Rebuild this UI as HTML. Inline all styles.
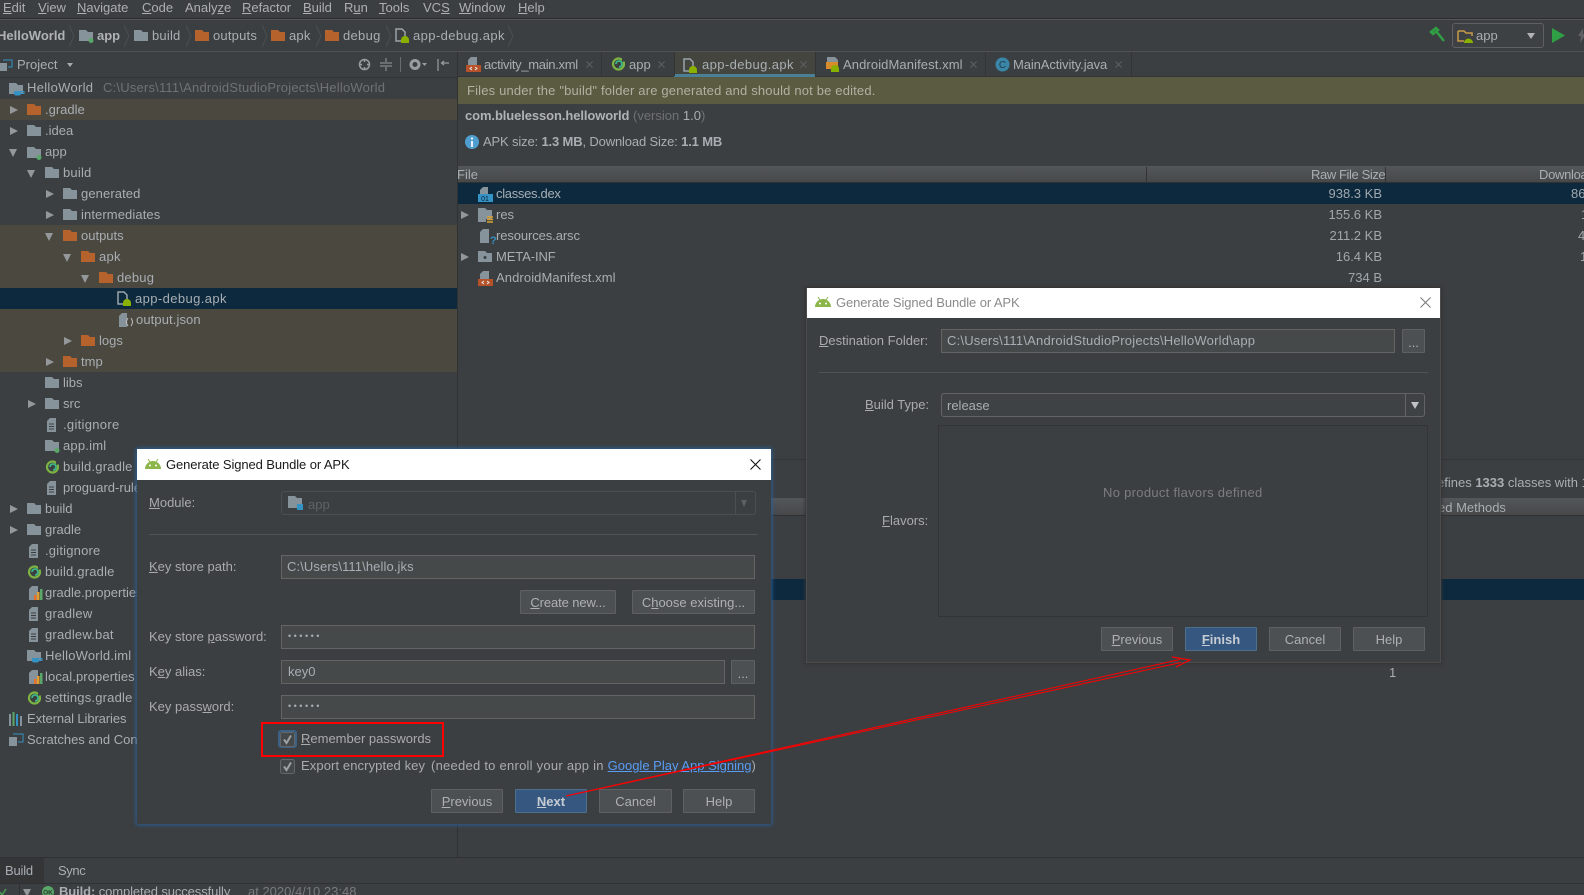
<!DOCTYPE html>
<html><head><meta charset="utf-8"><title>Generate Signed Bundle or APK</title>
<style>
html,body{margin:0;padding:0;background:#3c3f41;width:1584px;height:895px;overflow:hidden}
body{position:relative;font:13px/16px "Liberation Sans",sans-serif;color:#a8aeb3}
.t{position:absolute;white-space:nowrap;line-height:16px}
.a{position:absolute}
svg.i{position:absolute;overflow:visible}
.tr{position:absolute;width:0;height:0;margin-top:1px;border-left:8px solid #94989b;border-top:4.5px solid transparent;border-bottom:4.5px solid transparent}
.td{position:absolute;width:0;height:0;margin-top:1px;border-top:8px solid #94989b;border-left:4.5px solid transparent;border-right:4.5px solid transparent}
.m{color:#adafb1;top:0}
.b{font-weight:bold}
.o{position:absolute;left:0;width:457px;background:#4b4840}
.sel{position:absolute;background:#0d293e}
.input{position:absolute;box-sizing:border-box;background:#45494a;border:1px solid #646464}
.btn{position:absolute;box-sizing:border-box;height:24px;background:#4c5052;border:1px solid #5e6062;border-radius:1px;text-align:center;line-height:24px;color:#aeb0b2;white-space:nowrap}
.btn.d{background:#365880;border-color:#4c708c;color:#c5ccd4;font-weight:bold}
.dlg{position:absolute;box-sizing:border-box;background:#3c3f41}
.lbl{color:#a9abad}
.hdr{position:absolute;background:linear-gradient(#54575a,#46484a);border-bottom:1px solid #2f3132;box-sizing:border-box}
.sz{position:absolute;right:202px;white-space:nowrap;color:#a0a7ad}
.l1{letter-spacing:.1px}.l2{letter-spacing:.2px}.l3{letter-spacing:.3px}.l4{letter-spacing:.4px}
.n1{letter-spacing:-.1px}.n2{letter-spacing:-.2px}.n3{letter-spacing:-.3px}.n4{letter-spacing:-.4px}
</style></head><body>
<svg width="0" height="0" style="position:absolute">
<defs>
<symbol id="fg" viewBox="0 0 14 11"><path d="M0 0h7l2 2h5v9H0z" fill="#87939a"/></symbol>
<symbol id="fo" viewBox="0 0 14 11"><path d="M0 0h7l2 2h5v9H0z" fill="#b5622c"/></symbol>
<symbol id="fm" viewBox="0 0 15 13"><path d="M0 0h7l2 2h5v9H0z" fill="#87939a"/><circle cx="12" cy="10.500" r="2.500" fill="#59a869"/></symbol>
<symbol id="txt" viewBox="0 0 12 14"><path d="M3 0h6v14H0V3z" fill="#87939a"/><path d="M2 6h5M2 8.500h5M2 11h5" stroke="#3c3f41" stroke-width="1"/></symbol>
<symbol id="grd" viewBox="0 0 15 14"><circle cx="7.500" cy="7" r="5.500" fill="none" stroke="#7cb342" stroke-width="2.200"/><path d="M5 7a3 3 0 1 1 3 3" fill="none" stroke="#3bb58a" stroke-width="1.800"/><path d="M11 1l3 3-3 1z" fill="#3c3f41"/></symbol>
<symbol id="prop" viewBox="0 0 14 14"><path d="M3 0h6v14H0V3z" fill="#87939a"/><rect x="5" y="9" width="2.500" height="5" fill="#e8702a"/><rect x="8" y="6" width="2.500" height="8" fill="#e0a030"/><rect x="11" y="3" width="2.500" height="11" fill="#59a869"/></symbol>
<symbol id="iml" viewBox="0 0 16 13"><path d="M0 0h7l2 2h5v9H0z" fill="#87939a"/><path d="M5 8h7v2.500a2 2 0 0 1-2 2H7a2 2 0 0 1-2-2z" fill="#3592c4"/><path d="M12 8.500h3v2h-3" fill="none" stroke="#3592c4"/></symbol>
<symbol id="apk" viewBox="0 0 16 15"><path d="M1 1h6l3 3v9H1z" fill="none" stroke="#9aa4aa" stroke-width="1.500"/><path d="M6 15v-3a4 4 0 0 1 8 0v3z" fill="#8ab000"/></symbol>
<symbol id="and" viewBox="0 0 16 10"><path d="M0 10a8 8 0 0 1 16 0z" fill="#8cb64a"/><path d="M3 0l2 3M13 0l-2 3" stroke="#8cb64a"/><circle cx="5" cy="6.500" r="1" fill="#fff"/><circle cx="11" cy="6.500" r="1" fill="#fff"/></symbol>
<symbol id="xml" viewBox="0 0 15 15"><path d="M5 0h6v8H2V3z" fill="#87939a"/><rect x="0" y="8" width="15" height="7" fill="#b5522a"/><path d="M6 10l-2 1.500 2 1.500M9 10l2 1.500-2 1.500" stroke="#e8e8e8" fill="none"/></symbol>
<symbol id="x" viewBox="0 0 8 8"><path d="M.5.5l7 7M7.500.5l-7 7" stroke="#626568" stroke-width="1" fill="none"/></symbol>
<symbol id="chev" viewBox="0 0 6 22"><path d="M0 0l5 11-5 11" stroke="#4c4f51" stroke-width="1" fill="none"/></symbol>
<symbol id="chk" viewBox="0 0 15 15"><rect x=".5" y=".5" width="14" height="14" rx="2" fill="#43494a" stroke="#646668"/><path d="M4 7.500l2.500 3.500L11 3.500" stroke="#a0a0a0" stroke-width="2" fill="none"/></symbol>
</defs></svg>

<!-- Menu -->
<span class="t m" style="left:3px"><u>E</u>dit</span>
<span class="t m" style="left:38px"><u>V</u>iew</span>
<span class="t m" style="left:77px"><u>N</u>avigate</span>
<span class="t m" style="left:142px"><u>C</u>ode</span>
<span class="t m" style="left:185px">Analy<u>z</u>e</span>
<span class="t m" style="left:242px"><u>R</u>efactor</span>
<span class="t m" style="left:303px"><u>B</u>uild</span>
<span class="t m" style="left:344px">R<u>u</u>n</span>
<span class="t m" style="left:379px"><u>T</u>ools</span>
<span class="t m" style="left:423px">VC<u>S</u></span>
<span class="t m" style="left:459px"><u>W</u>indow</span>
<span class="t m" style="left:518px"><u>H</u>elp</span>
<div class="a" style="left:0;top:18px;width:1584px;height:1px;background:#2b2b2b"></div>
<div class="a" style="left:0;top:19px;width:1584px;height:1px;background:#55585a"></div>

<!-- Breadcrumb -->
<span class="t b" style="left:-3px;top:28px;color:#b0b3b5">HelloWorld</span>
<svg class="i" style="left:69px;top:25px" width="6" height="22"><use href="#chev"/></svg>
<svg class="i" style="left:79px;top:30px" width="15" height="13"><use href="#fm"/></svg>
<span class="t b" style="left:97px;top:28px;color:#b0b3b5">app</span>
<svg class="i" style="left:124px;top:25px" width="6" height="22"><use href="#chev"/></svg>
<svg class="i" style="left:134px;top:30px" width="14" height="11"><use href="#fg"/></svg>
<span class="t l2" style="left:152px;top:28px">build</span>
<svg class="i" style="left:186px;top:25px" width="6" height="22"><use href="#chev"/></svg>
<svg class="i" style="left:195px;top:30px" width="14" height="11"><use href="#fo"/></svg>
<span class="t l2" style="left:213px;top:28px">outputs</span>
<svg class="i" style="left:262px;top:25px" width="6" height="22"><use href="#chev"/></svg>
<svg class="i" style="left:271px;top:30px" width="14" height="11"><use href="#fo"/></svg>
<span class="t l2" style="left:289px;top:28px">apk</span>
<svg class="i" style="left:316px;top:25px" width="6" height="22"><use href="#chev"/></svg>
<svg class="i" style="left:325px;top:30px" width="14" height="11"><use href="#fo"/></svg>
<span class="t l3" style="left:343px;top:28px">debug</span>
<svg class="i" style="left:386px;top:25px" width="6" height="22"><use href="#chev"/></svg>
<svg class="i" style="left:395px;top:28px" width="16" height="15"><use href="#apk"/></svg>
<span class="t l4" style="left:413px;top:28px">app-debug.apk</span>
<svg class="i" style="left:508px;top:25px" width="6" height="22"><use href="#chev"/></svg>
<div class="a" style="left:0;top:51px;width:1584px;height:1px;background:#4f5153"></div>

<!-- Right toolbar -->
<svg class="i" style="left:1430px;top:27px" width="15" height="16"><path d="M1 5l5-4 2 2-5 4zM6 4l8 10" stroke="#2f9e44" stroke-width="2.500" fill="none"/></svg>
<div class="a" style="left:1452px;top:23px;width:90px;height:23px;border:1px solid #5e6062;border-radius:3px;background:#3e4143"></div>
<svg class="i" style="left:1457px;top:30px" width="17" height="13"><path d="M1 1h6l2 2h6v3M1 1v10h6" fill="none" stroke="#c99a4a" stroke-width="1.500"/><path d="M7 13a4.500 4.500 0 0 1 9 0z" fill="#8ab000"/></svg>
<span class="t" style="left:1476px;top:28px">app</span>
<div class="a" style="left:1527px;top:33px;width:0;height:0;border-top:6px solid #b0b2b4;border-left:4.500px solid transparent;border-right:4.500px solid transparent"></div>
<svg class="i" style="left:1552px;top:28px" width="13" height="15"><path d="M0 0l13 7.500L0 15z" fill="#2f9e44"/></svg>
<svg class="i" style="left:1578px;top:28px" width="8" height="15"><path d="M5 0L0 8h3l-1 7 6-9H5z" fill="#5e6062"/></svg>

<!-- Project header -->
<svg class="i" style="left:0;top:59px" width="13" height="12"><path d="M3 1h9v7H8" fill="none" stroke="#3592c4"/><rect x="0" y="4" width="7" height="8" fill="#87939a"/></svg>
<span class="t" style="left:17px;top:57px">Project</span>
<div class="a" style="left:67px;top:63px;width:0;height:0;border-top:4px solid #a9abad;border-left:3.500px solid transparent;border-right:3.500px solid transparent"></div>
<svg class="i" style="left:358px;top:58px" width="13" height="13"><circle cx="6.500" cy="6.500" r="5" fill="none" stroke="#9a9da0" stroke-width="1.500"/><path d="M6.500 1v3M6.500 9v3M1 6.500h3M9 6.500h3" stroke="#9a9da0" stroke-width="1.500"/></svg>
<svg class="i" style="left:380px;top:58px" width="12" height="13"><path d="M0 5h12M0 8h12M6 0v4M6 9v4" stroke="#9a9da0"/></svg>
<div class="a" style="left:400px;top:57px;width:1px;height:15px;background:#6a6d70"></div>
<svg class="i" style="left:409px;top:58px" width="18" height="13"><circle cx="6" cy="6.500" r="4" fill="none" stroke="#9a9da0" stroke-width="3"/><path d="M13 5h5l-2.500 3z" fill="#9a9da0"/></svg>
<svg class="i" style="left:437px;top:59px" width="12" height="12"><path d="M1 0v12M12 4H5M7 2L4.500 4 7 6" stroke="#9a9da0" stroke-width="1.200" fill="none"/></svg>
<div class="a" style="left:0;top:77px;width:457px;height:1px;background:#323436"></div>

<!-- Tree backgrounds -->
<div class="o" style="top:99px;height:21px"></div>
<div class="o" style="top:225px;height:63px"></div>
<div class="o" style="top:309px;height:63px"></div>
<div class="sel" style="left:0;top:288px;width:457px;height:21px"></div>

<!-- Tree -->
<svg class="i" style="left:9px;top:83px" width="16" height="13"><use href="#iml"/></svg>
<span class="t l3" style="left:27px;top:80px">HelloWorld</span>
<span class="t l2" style="left:103px;top:80px;color:#6f7275">C:\Users\111\AndroidStudioProjects\HelloWorld</span>

<div class="tr" style="left:10px;top:105px"></div><svg class="i" style="left:27px;top:104px" width="14" height="11"><use href="#fo"/></svg><span class="t" style="left:45px;top:102px">.gradle</span>
<div class="tr" style="left:10px;top:126px"></div><svg class="i" style="left:27px;top:125px" width="14" height="11"><use href="#fg"/></svg><span class="t" style="left:45px;top:123px">.idea</span>
<div class="td" style="left:9px;top:148px"></div><svg class="i" style="left:27px;top:147px" width="15" height="13"><use href="#fm"/></svg><span class="t" style="left:45px;top:144px">app</span>
<div class="td" style="left:27px;top:169px"></div><svg class="i" style="left:45px;top:167px" width="14" height="11"><use href="#fg"/></svg><span class="t l2" style="left:63px;top:165px">build</span>
<div class="tr" style="left:46px;top:189px"></div><svg class="i" style="left:63px;top:188px" width="14" height="11"><use href="#fg"/></svg><span class="t l1" style="left:81px;top:186px">generated</span>
<div class="tr" style="left:46px;top:210px"></div><svg class="i" style="left:63px;top:209px" width="14" height="11"><use href="#fg"/></svg><span class="t l1" style="left:81px;top:207px">intermediates</span>
<div class="td" style="left:45px;top:232px"></div><svg class="i" style="left:63px;top:230px" width="14" height="11"><use href="#fo"/></svg><span class="t" style="left:81px;top:228px">outputs</span>
<div class="td" style="left:63px;top:253px"></div><svg class="i" style="left:81px;top:251px" width="14" height="11"><use href="#fo"/></svg><span class="t l3" style="left:99px;top:249px">apk</span>
<div class="td" style="left:81px;top:274px"></div><svg class="i" style="left:99px;top:272px" width="14" height="11"><use href="#fo"/></svg><span class="t l2" style="left:117px;top:270px">debug</span>
<svg class="i" style="left:117px;top:291px" width="16" height="15"><use href="#apk"/></svg><span class="t l4" style="left:135px;top:291px">app-debug.apk</span>
<svg class="i" style="left:119px;top:313px" width="13" height="14"><path d="M3 0h5v14H0V3z" fill="#87939a"/><path d="M9 5Q6 9 9 13M12 5q3 4 0 8" stroke="#c0c2c4" fill="none"/></svg><span class="t l1" style="left:136px;top:312px">output.json</span>
<div class="tr" style="left:64px;top:336px"></div><svg class="i" style="left:81px;top:335px" width="14" height="11"><use href="#fo"/></svg><span class="t" style="left:99px;top:333px">logs</span>
<div class="tr" style="left:46px;top:357px"></div><svg class="i" style="left:63px;top:356px" width="14" height="11"><use href="#fo"/></svg><span class="t" style="left:81px;top:354px">tmp</span>
<svg class="i" style="left:45px;top:377px" width="14" height="11"><use href="#fg"/></svg><span class="t" style="left:63px;top:375px">libs</span>
<div class="tr" style="left:28px;top:399px"></div><svg class="i" style="left:45px;top:398px" width="14" height="11"><use href="#fg"/></svg><span class="t" style="left:63px;top:396px">src</span>
<svg class="i" style="left:47px;top:418px" width="12" height="14"><use href="#txt"/></svg><span class="t l3" style="left:63px;top:417px">.gitignore</span>
<svg class="i" style="left:45px;top:440px" width="15" height="13"><use href="#fm"/></svg><span class="t l2" style="left:63px;top:438px">app.iml</span>
<svg class="i" style="left:45px;top:460px" width="15" height="14"><use href="#grd"/></svg><span class="t l2" style="left:63px;top:459px">build.gradle</span>
<svg class="i" style="left:47px;top:481px" width="12" height="14"><use href="#txt"/></svg><span class="t" style="left:63px;top:480px">proguard-rules.pro</span>
<div class="tr" style="left:10px;top:504px"></div><svg class="i" style="left:27px;top:503px" width="14" height="11"><use href="#fg"/></svg><span class="t" style="left:45px;top:501px">build</span>
<div class="tr" style="left:10px;top:525px"></div><svg class="i" style="left:27px;top:524px" width="14" height="11"><use href="#fg"/></svg><span class="t" style="left:45px;top:522px">gradle</span>
<svg class="i" style="left:29px;top:544px" width="12" height="14"><use href="#txt"/></svg><span class="t l2" style="left:45px;top:543px">.gitignore</span>
<svg class="i" style="left:27px;top:565px" width="15" height="14"><use href="#grd"/></svg><span class="t l2" style="left:45px;top:564px">build.gradle</span>
<svg class="i" style="left:29px;top:586px" width="14" height="14"><use href="#prop"/></svg><span class="t" style="left:45px;top:585px">gradle.properties</span>
<svg class="i" style="left:29px;top:607px" width="12" height="14"><use href="#txt"/></svg><span class="t l3" style="left:45px;top:606px">gradlew</span>
<svg class="i" style="left:29px;top:628px" width="12" height="14"><use href="#txt"/></svg><span class="t l2" style="left:45px;top:627px">gradlew.bat</span>
<svg class="i" style="left:27px;top:650px" width="16" height="13"><use href="#iml"/></svg><span class="t l2" style="left:45px;top:648px">HelloWorld.iml</span>
<svg class="i" style="left:29px;top:670px" width="14" height="14"><use href="#prop"/></svg><span class="t l1" style="left:45px;top:669px">local.properties</span>
<svg class="i" style="left:27px;top:691px" width="15" height="14"><use href="#grd"/></svg><span class="t l2" style="left:45px;top:690px">settings.gradle</span>
<svg class="i" style="left:9px;top:712px" width="14" height="14"><path d="M1 2v12" stroke="#87939a" stroke-width="2"/><path d="M4.500 0v14" stroke="#59a869" stroke-width="2"/><path d="M8 2v12" stroke="#3592c4" stroke-width="2"/><path d="M12 4v10" stroke="#87939a" stroke-width="2"/></svg><span class="t n1" style="left:27px;top:711px">External Libraries</span>
<svg class="i" style="left:9px;top:733px" width="14" height="13"><path d="M4 1h10v8H9" fill="none" stroke="#3592c4"/><rect x="0" y="4" width="8" height="9" fill="#87939a"/></svg><span class="t" style="left:27px;top:732px">Scratches and Consoles</span>

<!-- Divider -->
<div class="a" style="left:457px;top:52px;width:1px;height:805px;background:#2f3133"></div>
<!-- Tabs -->
<div class="a" style="left:674px;top:52px;width:141px;height:22px;background:#44453f"></div>
<div class="a" style="left:674px;top:74px;width:141px;height:3px;background:#4a8096"></div>
<div class="a" style="left:601px;top:52px;width:1px;height:24px;background:#323436"></div>
<div class="a" style="left:674px;top:52px;width:1px;height:24px;background:#323436"></div>
<div class="a" style="left:815px;top:52px;width:1px;height:24px;background:#323436"></div>
<div class="a" style="left:985px;top:52px;width:1px;height:24px;background:#323436"></div>
<div class="a" style="left:1131px;top:52px;width:1px;height:24px;background:#323436"></div>
<svg class="i" style="left:466px;top:57px" width="15" height="15"><use href="#xml"/></svg>
<span class="t n3" style="left:484px;top:57px">activity_main.xml</span>
<svg class="i" style="left:586px;top:61px" width="7" height="7"><use href="#x"/></svg>
<svg class="i" style="left:611px;top:57px" width="15" height="14"><use href="#grd"/></svg>
<span class="t" style="left:629px;top:57px">app</span>
<svg class="i" style="left:658px;top:61px" width="7" height="7"><use href="#x"/></svg>
<svg class="i" style="left:683px;top:58px" width="16" height="15"><use href="#apk"/></svg>
<span class="t l4" style="left:702px;top:57px">app-debug.apk</span>
<svg class="i" style="left:800px;top:61px" width="7" height="7"><use href="#x"/></svg>
<svg class="i" style="left:825px;top:57px" width="15" height="15"><path d="M2 0h8l3 3v5H2z" fill="#87939a"/><rect x="1" y="5" width="12" height="7" fill="#d88b2a"/><path d="M6 14v-2a4 4 0 0 1 8 0v3H6z" fill="#8ab000"/></svg>
<span class="t l1" style="left:843px;top:57px">AndroidManifest.xml</span>
<svg class="i" style="left:970px;top:61px" width="7" height="7"><use href="#x"/></svg>
<svg class="i" style="left:995px;top:57px" width="15" height="15"><circle cx="7.500" cy="7.500" r="7" fill="#3a86a8"/><text x="7.500" y="11" text-anchor="middle" font-size="10" fill="#1f3a48" font-family="Liberation Sans">C</text></svg>
<span class="t n1" style="left:1013px;top:57px">MainActivity.java</span>
<svg class="i" style="left:1115px;top:61px" width="7" height="7"><use href="#x"/></svg>
<div class="a" style="left:458px;top:76px;width:216px;height:1px;background:#323436"></div>
<div class="a" style="left:815px;top:76px;width:769px;height:1px;background:#323436"></div>

<!-- Banner -->
<div class="a" style="left:458px;top:77px;width:1126px;height:27px;background:#5a5b41"></div>
<span class="t" style="left:467px;top:83px;color:#b0b1a2;letter-spacing:.17px">Files under the "build" folder are generated and should not be edited.</span>
<span class="t b n1" style="left:465px;top:108px;color:#b0b3b5">com.bluelesson.helloworld</span>
<span class="t" style="left:633px;top:108px;color:#6f7275">(version <span style="color:#a8aeb3">1.0</span>)</span>
<svg class="i" style="left:465px;top:135px" width="14" height="14"><circle cx="7" cy="7" r="7" fill="#4f9ed0"/><rect x="6" y="6" width="2" height="6" fill="#eef"/><rect x="6" y="2.500" width="2" height="2" fill="#eef"/></svg>
<span class="t" style="left:483px;top:134px;letter-spacing:-.15px">APK size: <b>1.3 MB</b>, Download Size: <b>1.1 MB</b></span>

<!-- Table -->
<div class="hdr" style="left:458px;top:166px;width:1126px;height:17px"></div>
<span class="t" style="left:457px;top:167px">File</span>
<div class="a" style="left:1146px;top:167px;width:1px;height:15px;background:#333"></div>
<div class="a" style="left:1385px;top:167px;width:1px;height:15px;background:#333"></div>
<span class="t n4" style="left:1311px;top:167px">Raw File Size</span>
<span class="t n3" style="left:1539px;top:167px">Download Size</span>
<div class="sel" style="left:458px;top:183px;width:1126px;height:21px"></div>

<svg class="i" style="left:478px;top:187px" width="15" height="15"><path d="M5 0h5v7H2V3z" fill="#87939a"/><rect x="0" y="7" width="15" height="8" fill="#3592c4"/><text x="7" y="14" text-anchor="middle" font-size="7" fill="#123" font-family="Liberation Sans">01</text></svg>
<span class="t n3" style="left:496px;top:186px">classes.dex</span>
<div class="tr" style="left:461px;top:210px"></div>
<svg class="i" style="left:478px;top:208px" width="15" height="15"><path d="M0 0h7l2 2h5v9H8v3H0z" fill="#87939a"/><path d="M9 9h6M9 11.500h6M9 14h6" stroke="#d8a030" stroke-width="1.500"/></svg>
<span class="t" style="left:496px;top:207px">res</span>
<svg class="i" style="left:480px;top:229px" width="14" height="15"><path d="M3 0h6v14H0V3z" fill="#87939a"/><text x="10" y="15" font-size="11" font-weight="bold" fill="#3592c4" font-family="Liberation Sans">?</text></svg>
<span class="t n1" style="left:496px;top:228px">resources.arsc</span>
<div class="tr" style="left:461px;top:252px"></div>
<svg class="i" style="left:478px;top:251px" width="14" height="11"><path d="M0 0h7l2 2h5v9H0z" fill="#87939a"/><circle cx="7" cy="6.500" r="1.500" fill="#3c3f41"/></svg>
<span class="t n1" style="left:496px;top:249px">META-INF</span>
<svg class="i" style="left:478px;top:271px" width="15" height="15"><use href="#xml"/></svg>
<span class="t l1" style="left:496px;top:270px">AndroidManifest.xml</span>

<span class="sz" style="top:186px">938.3 KB</span>
<span class="sz" style="top:207px">155.6 KB</span>
<span class="sz" style="top:228px">211.2 KB</span>
<span class="sz" style="top:249px">16.4 KB</span>
<span class="sz" style="top:270px">734 B</span>
<span class="t" style="left:1571px;top:186px;color:#a0a7ad">86</span>
<span class="t" style="left:1581px;top:207px;color:#a0a7ad">1</span>
<span class="t" style="left:1578px;top:228px;color:#a0a7ad">4</span>
<span class="t" style="left:1580px;top:249px;color:#a0a7ad">1</span>

<!-- Lower section -->
<div class="a" style="left:458px;top:459px;width:1126px;height:1px;background:#333537"></div>
<span class="t" style="left:1437px;top:475px">efines <b>1333</b> classes with 1</span>
<div class="hdr" style="left:458px;top:498px;width:1126px;height:18px"></div>
<span class="t" style="left:1438px;top:500px">ed Methods</span>
<div class="sel" style="left:458px;top:579px;width:1126px;height:21px"></div>
<span class="t" style="left:1389px;top:665px">1</span>

<!-- Bottom -->
<div class="a" style="left:0;top:857px;width:1584px;height:1px;background:#2f3133"></div>
<div class="a" style="left:0;top:858px;width:44px;height:25px;background:#333537"></div>
<span class="t n2" style="left:5px;top:863px">Build</span>
<span class="t n4" style="left:58px;top:863px">Sync</span>
<div class="a" style="left:0;top:883px;width:1584px;height:1px;background:#2f3133"></div>
<div class="a" style="left:19px;top:884px;width:1px;height:11px;background:#2f3133"></div>
<div class="td" style="left:23px;top:888px"></div>
<svg class="i" style="left:0;top:888px" width="7" height="7"><path d="M0 4l2 3 4-6" stroke="#499c54" stroke-width="1.500" fill="none"/></svg>
<svg class="i" style="left:42px;top:886px" width="12" height="12"><circle cx="6" cy="6" r="6" fill="#59a869"/><text x="6" y="8.500" text-anchor="middle" font-size="6.500" font-weight="bold" fill="#2b3a2e" font-family="Liberation Sans">OK</text></svg>
<span class="t n1" style="left:59px;top:884px"><b>Build:</b> completed successfully</span>
<span class="t" style="left:248px;top:884px;color:#787b7e">at 2020/4/10 23:48</span>

<!-- Dialog 1 -->
<div class="dlg" style="left:137px;top:449px;width:634px;height:375px;box-shadow:0 0 4px 1px #2a5f96"></div>
<div class="a" style="left:137px;top:449px;width:634px;height:31px;background:#fff"></div>
<svg class="i" style="left:145px;top:459px" width="16" height="10"><use href="#and"/></svg>
<span class="t n1" style="left:166px;top:457px;color:#1a1a1a">Generate Signed Bundle or APK</span>
<svg class="i" style="left:750px;top:459px" width="11" height="11"><path d="M.5.5l10 10M10.500.5l-10 10" stroke="#111" stroke-width="1.100"/></svg>

<span class="t lbl" style="left:149px;top:495px"><u>M</u>odule:</span>
<div class="a" style="left:281px;top:491px;width:473px;height:22px;border:1px solid #4c4f51;border-radius:3px"></div>
<div class="a" style="left:735px;top:492px;width:1px;height:22px;background:#4c4f51"></div>
<div class="a" style="left:741px;top:500px;width:0;height:0;border-top:7px solid #5d6062;border-left:3.500px solid transparent;border-right:3.500px solid transparent"></div>
<svg class="i" style="left:288px;top:496px" width="15" height="15"><path d="M0 0h7l2 2h5v10H0z" fill="#87939a"/><rect x="9" y="8" width="6" height="6" fill="#3592c4"/></svg>
<span class="t" style="left:308px;top:497px;color:#5f6264">app</span>
<div class="a" style="left:149px;top:534px;width:609px;height:1px;background:#505254"></div>

<span class="t lbl" style="left:149px;top:559px"><u>K</u>ey store path:</span>
<div class="input" style="left:281px;top:555px;width:474px;height:24px"></div>
<span class="t l1" style="left:287px;top:559px">C:\Users\111\hello.jks</span>
<div class="btn n1" style="left:520px;top:590px;width:96px"><u>C</u>reate new...</div>
<div class="btn" style="left:632px;top:590px;width:123px">C<u>h</u>oose existing...</div>
<span class="t lbl" style="left:149px;top:629px">Key store <u>p</u>assword:</span>
<div class="input" style="left:281px;top:625px;width:474px;height:24px"></div>
<span class="t" style="left:288px;top:628px;font-size:9px;letter-spacing:2.500px">••••••</span>
<span class="t lbl" style="left:149px;top:664px">K<u>e</u>y alias:</span>
<div class="input" style="left:281px;top:660px;width:444px;height:24px"></div>
<span class="t" style="left:288px;top:664px">key0</span>
<div class="btn" style="left:731px;top:660px;width:24px;line-height:26px">...</div>
<span class="t lbl" style="left:149px;top:699px">Key pass<u>w</u>ord:</span>
<div class="input" style="left:281px;top:695px;width:474px;height:24px"></div>
<span class="t" style="left:288px;top:698px;font-size:9px;letter-spacing:2.500px">••••••</span>

<div class="a" style="left:278px;top:730px;width:19px;height:18px;box-sizing:border-box;border:2px solid #3d6185;border-radius:3px"></div>
<svg class="i" style="left:280px;top:732px" width="15" height="15"><use href="#chk"/></svg>
<span class="t lbl" style="left:301px;top:731px"><u>R</u>emember passwords</span>
<div class="a" style="left:261px;top:722px;width:179px;height:31px;border:2px solid #f00"></div>
<svg class="i" style="left:280px;top:759px" width="15" height="15"><use href="#chk"/></svg>
<span class="t lbl l1" style="left:301px;top:758px">Export encrypted key</span>
<span class="t lbl" style="left:431px;top:758px;letter-spacing:.25px">(needed to enroll your app in <span style="color:#589df6;text-decoration:underline;letter-spacing:0">Google Play App Signing</span>)</span>

<div class="btn" style="left:431px;top:789px;width:72px"><u>P</u>revious</div>
<div class="btn d" style="left:515px;top:789px;width:72px"><u>N</u>ext</div>
<div class="btn" style="left:599px;top:789px;width:73px">Cancel</div>
<div class="btn" style="left:683px;top:789px;width:72px">Help</div>

<!-- Dialog 2 -->
<div class="dlg" style="left:806px;top:288px;width:635px;height:375px;box-shadow:0 0 3px 1px #333;border:1px solid #4a4c4e"></div>
<div class="a" style="left:807px;top:288px;width:633px;height:30px;background:#fff"></div>
<svg class="i" style="left:815px;top:297px" width="16" height="10"><use href="#and"/></svg>
<span class="t n1" style="left:836px;top:295px;color:#8a8a8a">Generate Signed Bundle or APK</span>
<svg class="i" style="left:1420px;top:297px" width="11" height="11"><path d="M.5.5l10 10M10.500.5l-10 10" stroke="#777" stroke-width="1"/></svg>

<span class="t lbl" style="left:819px;top:333px"><u>D</u>estination Folder:</span>
<div class="input" style="left:941px;top:329px;width:454px;height:24px"></div>
<span class="t l2" style="left:947px;top:333px">C:\Users\111\AndroidStudioProjects\HelloWorld\app</span>
<div class="btn" style="left:1402px;top:329px;width:23px;line-height:26px">...</div>
<div class="a" style="left:819px;top:372px;width:609px;height:1px;background:#505254"></div>

<span class="t lbl" style="left:865px;top:397px"><u>B</u>uild Type:</span>
<div class="a" style="left:941px;top:393px;width:482px;height:22px;border:1px solid #646464;border-radius:3px;background:#3f4244"></div>
<span class="t" style="left:947px;top:398px">release</span>
<div class="a" style="left:1405px;top:394px;width:1px;height:22px;background:#646464"></div>
<div class="a" style="left:1411px;top:402px;width:0;height:0;border-top:7px solid #c0c2c4;border-left:4px solid transparent;border-right:4px solid transparent"></div>

<div class="a" style="left:938px;top:425px;width:488px;height:190px;border:1px solid #323436"></div>
<span class="t l3" style="left:1103px;top:485px;color:#7b7d7f">No product flavors defined</span>
<span class="t lbl" style="left:882px;top:513px"><u>F</u>lavors:</span>

<div class="btn" style="left:1101px;top:627px;width:72px"><u>P</u>revious</div>
<div class="btn d" style="left:1185px;top:627px;width:72px"><u>F</u>inish</div>
<div class="btn" style="left:1269px;top:627px;width:72px">Cancel</div>
<div class="btn" style="left:1353px;top:627px;width:72px">Help</div>

<!-- Arrow -->
<svg class="i" style="left:0;top:0" width="1584" height="895">
<path d="M566 796L1181 662.500" stroke="#f00" stroke-width="1" fill="none"/>
<path d="M566 796L1180 659.500" stroke="#f00" stroke-width="1" fill="none"/>
<path d="M1172 657L1190 660 1176 667" stroke="#f00" stroke-width="1.200" fill="none"/>
</svg>
</body></html>
